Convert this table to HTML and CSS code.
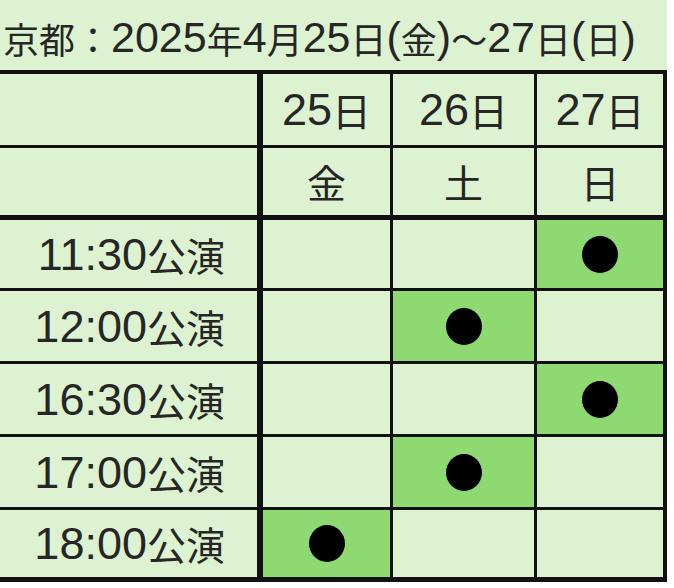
FILE: index.html
```html
<!DOCTYPE html>
<html lang="ja">
<head>
<meta charset="utf-8">
<title>京都公演</title>
<link rel="stylesheet" href="styles.css">
</head>
<body>
<div class="sheet">
  <div class="title">京都：<span class="n">2025</span>年<span class="n">4</span>月<span class="n">25</span>日<span class="n">(</span>金<span class="n">)</span>～<span class="n">27</span>日<span class="n">(</span>日<span class="n">)</span></div>
  <div class="grid">
    <div class="cell lab"></div>
    <div class="cell"><span class="n">25</span>日</div>
    <div class="cell"><span class="n">26</span>日</div>
    <div class="cell"><span class="n">27</span>日</div>

    <div class="cell lab wk"></div>
    <div class="cell wk">金</div>
    <div class="cell wk">土</div>
    <div class="cell wk">日</div>

    <div class="cell lab"><span class="n">11:30</span>公演</div>
    <div class="cell"></div>
    <div class="cell"></div>
    <div class="cell on"><span class="dot"></span></div>

    <div class="cell lab"><span class="n">12:00</span>公演</div>
    <div class="cell"></div>
    <div class="cell on"><span class="dot"></span></div>
    <div class="cell"></div>

    <div class="cell lab"><span class="n">16:30</span>公演</div>
    <div class="cell"></div>
    <div class="cell"></div>
    <div class="cell on"><span class="dot"></span></div>

    <div class="cell lab"><span class="n">17:00</span>公演</div>
    <div class="cell"></div>
    <div class="cell on"><span class="dot"></span></div>
    <div class="cell"></div>

    <div class="cell lab"><span class="n">18:00</span>公演</div>
    <div class="cell on"><span class="dot"></span></div>
    <div class="cell"></div>
    <div class="cell"></div>
  </div>
</div>
</body>
</html>
```

FILE: styles.css
```css
html, body {
  margin: 0;
  padding: 0;
  background: #ffffff;
}

.sheet {
  width: 667px;
  background: #dcf2d0;
  color: #262626;
  font-family: "Noto Sans CJK JP", "Liberation Sans", sans-serif;
}

.n {
  font-family: "Liberation Sans", "Noto Sans CJK JP", sans-serif;
}

.title {
  height: 70px;
  display: flex;
  align-items: center;
  padding: 5px 0 0 3px;
  box-sizing: border-box;
  font-size: 36px;
  line-height: 1;
  white-space: nowrap;
}

.title .n {
  font-size: 43px;
}

.grid {
  width: 667px;
  box-sizing: border-box;
  display: grid;
  grid-template-columns: 260px 127px 141px 126px;
  grid-template-rows: 71px 69px 68px 70px 70px 70px 67px;
  gap: 3px;
  background: #111111;
  border-top: 4px solid #111111;
  border-right: 4px solid #111111;
  border-bottom: 5px solid #111111;
}

.cell {
  background: #dcf2d0;
  display: flex;
  align-items: center;
  justify-content: center;
  font-size: 39px;
  line-height: 1;
  white-space: nowrap;
}

.cell .n {
  font-size: 45px;
}

.lab {
  border-right: 3px solid #111111;
  justify-content: flex-end;
  padding-right: 32px;
}

.wk {
  border-bottom: 2px solid #111111;
}

.on {
  background: #8fd973;
}

.dot {
  width: 36px;
  height: 37px;
  border-radius: 50%;
  background: #000000;
}
```
